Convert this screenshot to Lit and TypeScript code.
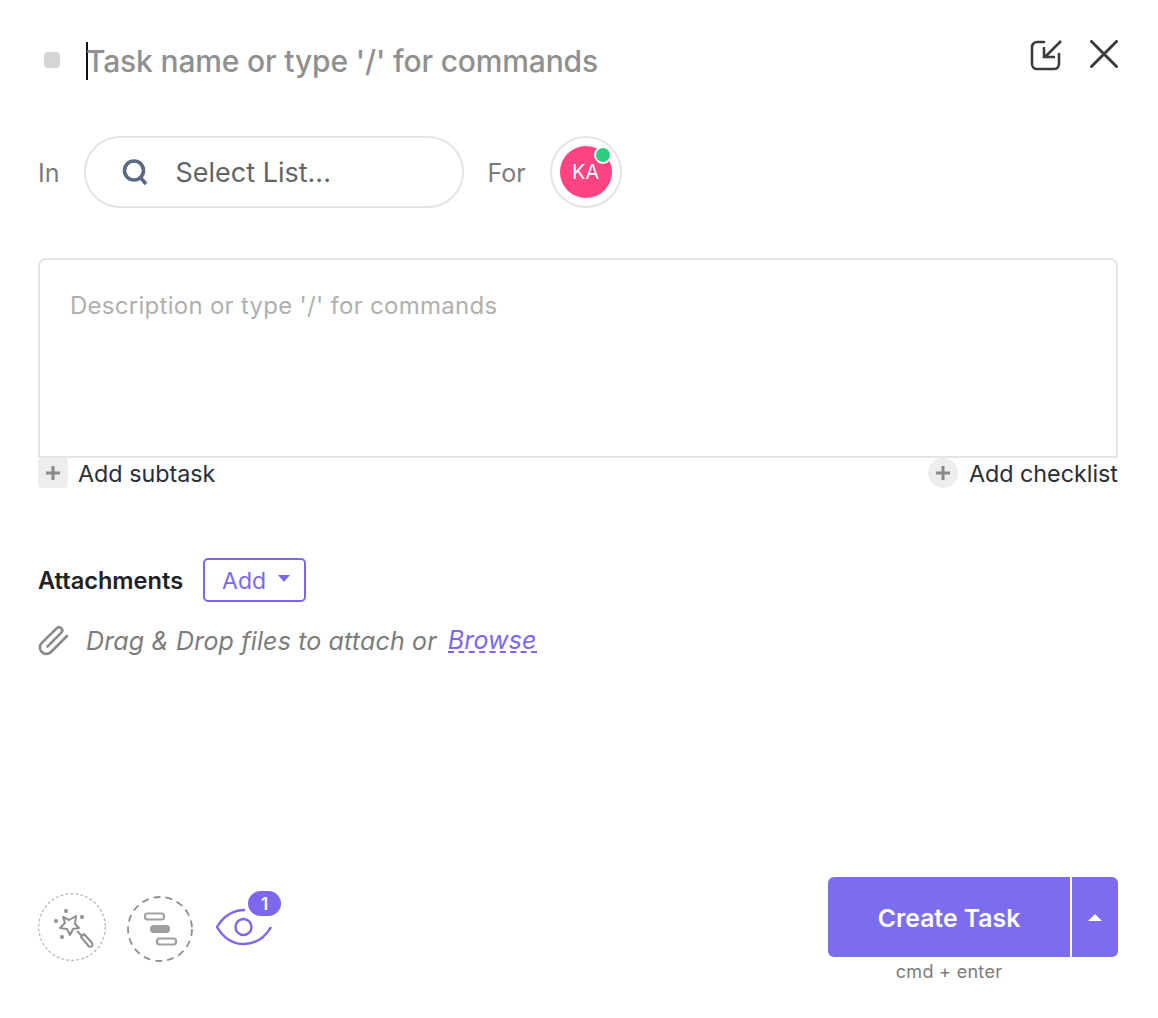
import { LitElement, html, css } from "lit";
import { customElement } from "lit/decorators.js";

@customElement("app-root")
export class AppRoot extends LitElement {
  static styles = css`
    :host {
      display: flex;
      flex-direction: column;
      width: 1158px;
      height: 1018px;
      box-sizing: border-box;
      padding: 0 40px 0 38px;
      background: #fff;
      font-family: Inter, "Liberation Sans", sans-serif;
      color: #292d34;
      overflow: hidden;
    }
    .title-row { display: flex; align-items: flex-start; height: 136px; box-sizing: border-box; padding-top: 42px; }
    .dot { width: 16px; height: 16px; border-radius: 4px; background: #d5d5d5; margin: 10px 0 0 6px; flex: none; }
    .cursor { width: 2px; height: 38px; background: #111; margin-left: 26px; flex: none; }
    .title { font-size: 30px; line-height: 38px; color: #909090; font-weight: 500; margin-left: -2px; letter-spacing: -0.16px; flex: 1; }
    .top-icons { display: flex; gap: 28px; margin-top: -2px; }
    .top-icons svg { display: block; }
    .for-row { display: flex; align-items: center; height: 72px; }
    .lbl { font-size: 25px; color: #7c7c7c; padding-top: 2px; }
    .pill {
      width: 380px; height: 72px; box-sizing: border-box; margin: 0 23px 0 25px;
      border: 2px solid #e4e4e4; border-radius: 36px;
      display: flex; align-items: center; padding-left: 35px; gap: 26px;
      font-size: 27px; color: #636468;
    }
    .assignee {
      width: 72px; height: 72px; box-sizing: border-box; margin-left: 24px;
      border: 2px solid #e4e4e4; border-radius: 50%;
      display: flex; align-items: center; justify-content: center; position: relative;
    }
    .avatar {
      width: 52px; height: 52px; border-radius: 50%; background: #fd4381; color: #fff;
      display: flex; align-items: center; justify-content: center; font-size: 20px;
    }
    .online {
      position: absolute; top: 8px; right: 8px; width: 14px; height: 14px; box-sizing: content-box;
      background: #2ecd7d; border: 2px solid #fff; border-radius: 50%;
    }
    .desc {
      margin-top: 50px; height: 200px; box-sizing: border-box;
      border: 2px solid #e4e4e4; border-radius: 8px 8px 0 0;
      padding: 30px; font-size: 24px; line-height: 32px; color: #b0b0b0; letter-spacing: 0.28px;
    }
    .adds { display: flex; justify-content: space-between; height: 30px; }
    .add { display: flex; align-items: center; gap: 10px; font-size: 23.3px; color: #292d34; }
    .plus { width: 30px; height: 30px; background: #ededed; display: flex; align-items: center; justify-content: center; }
    .plus.sq { border-radius: 4px; }
    .plus.rd { border-radius: 50%; margin-right: 1px; }
    .attach { display: flex; align-items: center; margin-top: 70px; height: 44px; }
    .attach b { font-size: 23.6px; font-weight: 600; color: #202124; }
    .add-btn {
      margin-left: 20px; width: 103px; height: 44px; box-sizing: border-box;
      border: 2px solid #7b68ee; border-radius: 5px; color: #7b68ee; font-size: 23px;
      display: flex; align-items: center; padding: 2px 0 0 17px; gap: 12px;
    }
    .caret { width: 0; height: 0; border: 6px solid transparent; border-top: 7px solid #7b68ee; border-bottom: 0; margin-top: -6px; }
    .drop { display: flex; align-items: center; margin-top: 21px; height: 36px; font-size: 25px; letter-spacing: 0.15px; font-style: italic; color: #7c7c7c; }
    .drop svg { flex: none; margin-right: 16px; }
    .drop a { color: #7b68ee; margin-left: 11px; border-bottom: 2px dashed #7b68ee; line-height: 22px; }
    .bottom { margin-top: 218px; display: flex; justify-content: space-between; align-items: flex-start; }
    .tools { display: flex; align-items: flex-start; padding-top: 16px; }
    .tools svg { display: block; flex: none; }
    .cta { width: 290px; display: flex; flex-direction: column; align-items: stretch; }
    .btns { display: flex; height: 80px; gap: 2px; color: #fff; }
    .create {
      width: 242px; background: #7b6ded; border-radius: 6px 0 0 6px; display: flex; align-items: center; justify-content: center;
      font-size: 24.8px; font-weight: 600; padding-top: 2px; box-sizing: border-box;
    }
    .more { flex: 1; background: #7b6ded; border-radius: 0 6px 6px 0; display: flex; align-items: center; justify-content: center; }
    .tri { width: 0; height: 0; border: 7px solid transparent; border-bottom: 7px solid #fff; border-top: 0; }
    .hint { width: 242px; text-align: center; font-size: 18px; line-height: 22px; margin-top: 4px; color: #7c7c7c; letter-spacing: 0.3px; }
    .eye { position: relative; width: 66px; height: 60px; margin-left: 23px; margin-top: -2px; }
    .badge {
      position: absolute; left: 32px; top: 0; width: 33px; height: 25px; border-radius: 13px; background: #7b68ee; color: #fff;
      font-size: 17px; font-weight: 600; display: flex; align-items: center; justify-content: center;
    }
    .eye svg { position: absolute; left: 0; top: 17px; }
    .gantt { margin-left: 21px; margin-top: 3px; }
  `;

  private plus() {
    return html`<svg width="16" height="16" viewBox="0 0 16 16"><path d="M8 1v14M1 8h14" stroke="#8a8a8a" stroke-width="3"/></svg>`;
  }

  render() {
    return html`
      <div class="title-row">
        <div class="dot"></div>
        <div class="cursor"></div>
        <div class="title">Task name or type '/' for commands</div>
        <div class="top-icons">
          <svg width="32" height="32" viewBox="0 0 32 32" fill="none" stroke="#3c3c3c" stroke-width="2.6" stroke-linecap="round" stroke-linejoin="round">
            <path d="M14 2H7a5 5 0 0 0-5 5v17a5 5 0 0 0 5 5h17a5 5 0 0 0 5-5v-10"/>
            <path d="M31 1 15 17M14 7v10h11" stroke-linecap="butt" stroke-linejoin="miter"/>
          </svg>
          <svg width="28" height="28" viewBox="0 0 28 28" fill="none" stroke="#3c3c3c" stroke-width="3" stroke-linecap="round">
            <path d="M1.5 1.5l25 25M26.5 1.5l-25 25"/>
          </svg>
        </div>
      </div>
      <div class="for-row">
        <span class="lbl">In</span>
        <div class="pill">
          <svg width="28" height="28" viewBox="0 0 28 28" fill="none" stroke="#5b6a82" stroke-width="3.6">
            <circle cx="13" cy="12.5" r="9.5"/><path d="M19 19l6 7"/>
          </svg>
          <span>Select List...</span>
        </div>
        <span class="lbl">For</span>
        <div class="assignee">
          <div class="avatar">KA</div>
          <div class="online"></div>
        </div>
      </div>
      <div class="desc">Description or type '/' for commands</div>
      <div class="adds">
        <div class="add"><div class="plus sq">${this.plus()}</div>Add subtask</div>
        <div class="add"><div class="plus rd">${this.plus()}</div>Add checklist</div>
      </div>
      <div class="attach">
        <b>Attachments</b>
        <div class="add-btn">Add<span class="caret"></span></div>
      </div>
      <div class="drop">
        <svg width="32" height="32" viewBox="0 0 32 32" fill="none" stroke="#8a8a8a" stroke-width="2.6" stroke-linecap="round">
          <path d="M29 11 13 27a6.5 6.5 0 0 1-9.2-9.2L19 3a3.2 3.2 0 0 1 4.5 4.5L9.5 21.5"/>
        </svg>
        <span>Drag &amp; Drop files to attach or</span>
        <a>Browse</a>
      </div>
      <div class="bottom">
        <div class="tools">
          <svg width="68" height="68" viewBox="0 0 68 68" fill="none">
            <circle cx="34" cy="34" r="33.3" stroke="#b5b5b5" stroke-width="1.2" stroke-dasharray="3 2"/>
            <g stroke="#8f8f8f" stroke-width="2" stroke-linejoin="round">
              <path d="M25 24l6 3 7-4-1 8 4 4-6 1-3 6-3-6-7-1 5-5z"/>
              <path d="M39 38l5 5"/>
              <path d="M43 44l3-3 8 9c.7 1 .7 2 0 3-1 1-2 1-3 .5z"/>
              <path d="M26.5 16.5l3 3m0-3l-3 3M42.5 22.500l3 3m0-3l-3 3M16.500 26.500l3 3m0-3l-3 3M22.500 42.500l3 3m0-3l-3 3" stroke-width="1.8"/>
            </g>
          </svg>
          <svg class="gantt" width="66" height="66" viewBox="0 0 66 66" fill="none">
            <circle cx="33" cy="33" r="32" stroke="#8f8f8f" stroke-width="1.8" stroke-dasharray="7 5"/>
            <rect x="18" y="17.5" width="19" height="6" rx="2.5" stroke="#a0a0a0" stroke-width="2.2"/>
            <rect x="23" y="29" width="20" height="8" rx="3.5" fill="#a0a0a0"/>
            <rect x="30" y="42.5" width="19" height="6" rx="2.5" stroke="#a0a0a0" stroke-width="2.2"/>
          </svg>
          <div class="eye">
            <svg width="56" height="38" viewBox="0 0 56 38" fill="none" stroke="#7b68ee" stroke-width="2.4">
              <path d="M29 2C16 2 7 9 1 19c6 10 15 17 27 17s21-7 27-17"/>
              <circle cx="27.5" cy="19" r="8"/>
            </svg>
            <div class="badge">1</div>
          </div>
        </div>
        <div class="cta">
          <div class="btns">
            <div class="create">Create Task</div>
            <div class="more"><span class="tri"></span></div>
          </div>
          <div class="hint">cmd + enter</div>
        </div>
      </div>
    `;
  }
}
